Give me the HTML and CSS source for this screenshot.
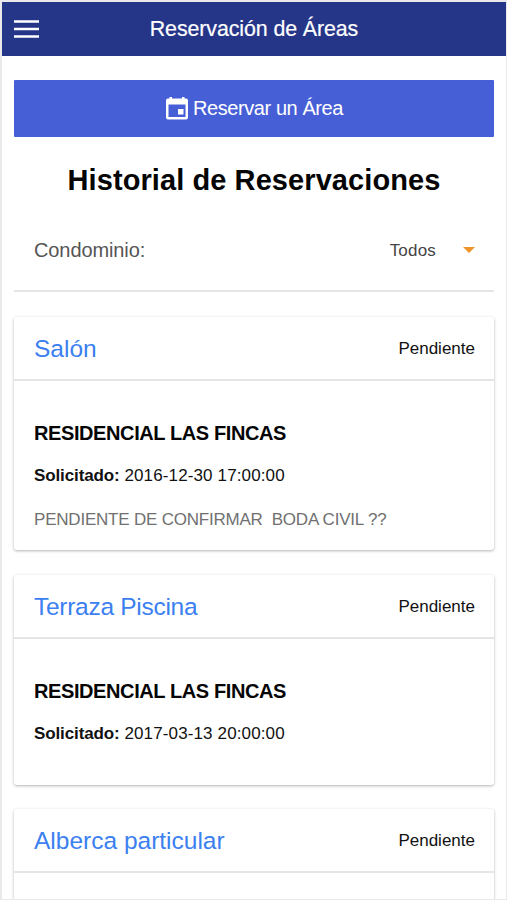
FILE: index.html
```html
<!DOCTYPE html>
<html lang="es">
<head>
<meta charset="utf-8">
<title>Reservación de Áreas</title>
<link rel="stylesheet" href="styles.css">
</head>
<body>
<div class="app">
  <header class="bar">
    <svg class="menu" viewBox="0 0 25 18"><path d="M0 1.500h25M0 9h25M0 16.500h25" stroke="#fff" stroke-width="2.300"/></svg>
    <h1>Reservación de Áreas</h1>
  </header>
  <main>
    <button class="reserve">
      <svg viewBox="0 0 22 23" width="22" height="23"><path fill="#fff" fill-rule="evenodd" d="M3.500 0h2.500v1.500h10V0h2.500v1.500h1.500q2 0 2 2v17q0 2-2 2H2q-2 0-2-2V3.500q0-2 2-2h1.500zM2.500 7.500v12.500h17v-12.500zM12 12h5.500v5.500H12z"/></svg>
      <span>Reservar un Área</span>
    </button>
    <h2>Historial de Reservaciones</h2>
    <div class="filter"><span class="label">Condominio:</span><span class="value">Todos</span><i class="caret"></i></div>
    <section class="card">
      <div class="head"><h3>Salón</h3><span class="status">Pendiente</span></div>
      <div class="body">
        <h4>RESIDENCIAL LAS FINCAS</h4>
        <p class="date"><b>Solicitado:</b> 2016-12-30 17:00:00</p>
        <p class="note">PENDIENTE DE CONFIRMAR&nbsp; BODA CIVIL ??</p>
      </div>
    </section>
    <section class="card short">
      <div class="head"><h3 class="tight">Terraza Piscina</h3><span class="status">Pendiente</span></div>
      <div class="body">
        <h4>RESIDENCIAL LAS FINCAS</h4>
        <p class="date"><b>Solicitado:</b> 2017-03-13 20:00:00</p>
      </div>
    </section>
    <section class="card">
      <div class="head"><h3>Alberca particular</h3><span class="status">Pendiente</span></div>
      <div class="body"></div>
    </section>
  </main>
</div>
</body>
</html>
```
FILE: styles.css
```css
* { box-sizing: border-box; margin: 0; padding: 0; }
body { background: #fff; font-family: "Liberation Sans", Arial, sans-serif; color: #111; }
.app { height: 900px; overflow: hidden; border: 2px solid #e9e9ec; border-width: 2px 1px 1px 2px; }
.bar { height: 54px; background: #253688; display: grid; grid-template-columns: 48px 1fr 48px; align-items: center; }
.menu { width: 25px; height: 18px; margin-left: 12px; }
h1 { color: #fff; font-size: 21.4px; letter-spacing: -.1px; font-weight: 400; line-height: 26px; text-align: center; white-space: nowrap; -webkit-text-stroke: .2px #fff; }
main { padding: 24px 12px 0; }
.reserve { width: 100%; height: 57px; border: 0; border-radius: 1px; background: #475fd6; color: #fff; font: 20px "Liberation Sans", Arial, sans-serif; letter-spacing: -.42px; display: flex; align-items: center; justify-content: center; gap: 5px; padding: 0 0 1px 1px; }
h2 { height: 86px; line-height: 86px; font-size: 29px; letter-spacing: .08px; text-align: center; white-space: nowrap; color: #050505; }
.filter { height: 69px; display: flex; align-items: center; padding: 1px 19px 13px 20px; border-bottom: 2px solid #e5e5e5; }
.label { flex: 1; font-size: 20px; letter-spacing: -.1px; color: #555; }
.value { font-size: 17px; letter-spacing: .2px; color: #444; }
.caret { border: 6px solid transparent; border-top-color: #ef9429; border-bottom: 0; margin: -2px 0 0 27px; }
.card { height: 233px; margin-top: 25px; border-radius: 3px; background: #fff; box-shadow: 0 1px 3px rgba(0,0,0,.3); }
.card.short { height: 210px; }
.card.short + .card { margin-top: 24px; }
.head { height: 64px; padding: 1px 19px 0 20px; display: flex; align-items: center; justify-content: space-between; border-bottom: 2px solid #e5e5e5; }
h3 { font-size: 24.5px; font-weight: 400; color: #3b7ff0; }
h3.tight { letter-spacing: -.28px; }
.status { font-size: 17px; }
.body { padding: 39px 20px 0; }
h4 { font-size: 20px; letter-spacing: -.4px; line-height: 26px; color: #050505; }
.date { margin-top: 18px; font-size: 17px; line-height: 24px; letter-spacing: .13px; }
.date b { letter-spacing: -.12px; }
.note { margin-top: 20px; font-size: 17px; line-height: 24px; letter-spacing: -.21px; color: #707070; }
```
